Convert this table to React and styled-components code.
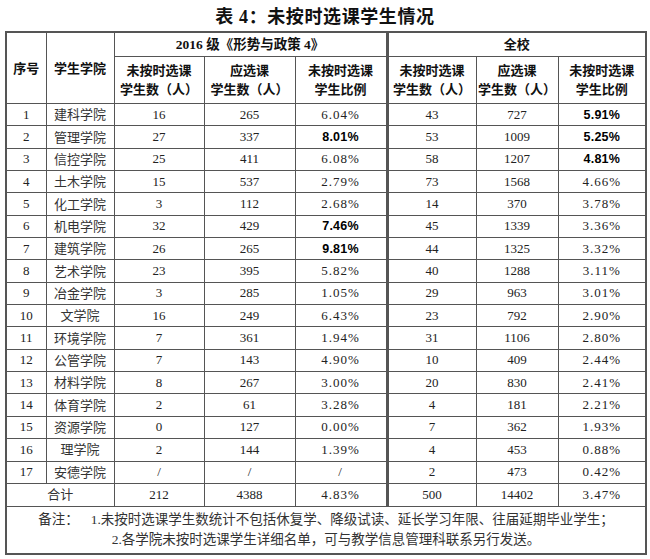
import React from "react";
import styled, { createGlobalStyle } from "styled-components";

const Global = createGlobalStyle`
  html, body { margin: 0; padding: 0; background: #fff; }
  body { width: 650px; height: 559px; overflow: hidden; }
`;

const Page = styled.div`
  width: 650px;
  padding: 0 0 0 5px;
  box-sizing: border-box;
`;

const Title = styled.h1`
  margin: 0;
  width: 640px;
  height: 31px;
  line-height: 35px;
  text-align: center;
  font-family: "Liberation Serif", "Noto Sans CJK SC", sans-serif;
  font-weight: 700;
  font-size: 18px;
  color: #111;
  letter-spacing: 0.6px;
`;

const Table = styled.table`
  width: 640px;
  table-layout: fixed;
  border-collapse: collapse;
  border: 2px solid #555;
`;

const Head = styled.th`
  border: 1px solid #555;
  ${(p) => p.$divider && "border-right: 3px solid #555;"}
  padding: 0;
  height: ${(p) => p.$h || 23}px;
  text-align: center;
  vertical-align: middle;
  font-family: "Liberation Serif", "Noto Sans CJK SC", sans-serif;
  font-weight: 700;
  font-size: ${(p) => p.$size || 13}px;
  line-height: 19px;
  color: #111;
`;

const Cell = styled.td`
  border: 1px solid #555;
  ${(p) => p.$divider && "border-right: 3px solid #555;"}
  padding: 0;
  height: ${(p) => p.$h || 21.35}px;
  text-align: center;
  vertical-align: middle;
  font-family: "Liberation Serif", "Noto Sans CJK SC", serif;
  font-size: 13px;
  line-height: 16px;
  color: #222;
`;

const Name = styled.span`
  font-family: "Noto Sans CJK SC", sans-serif;
  font-size: 13px;
  color: #333;
`;

const Pct = styled.span`
  font-family: ${(p) => (p.$bold ? '"Liberation Sans", sans-serif' : '"Liberation Serif", serif')};
  font-weight: ${(p) => (p.$bold ? 700 : 400)};
  font-size: ${(p) => (p.$bold ? "12.5px" : "13px")};
  letter-spacing: ${(p) => (p.$bold ? "0.2px" : "1px")};
  color: ${(p) => (p.$bold ? "#000" : "#222")};
`;

const NoteCell = styled.td`
  border: 1px solid #555;
  padding: 0;
  height: 46px;
  text-align: center;
  vertical-align: middle;
  font-family: "Liberation Serif", "Noto Sans CJK SC", serif;
  font-size: 13.5px;
  line-height: 20px;
  color: #333;
`;

const NoteLine = styled.div`
  white-space: nowrap;
`;

const Gap = styled.span`
  display: inline-block;
  width: 12px;
`;

const cols = [40, 68, 90, 91, 92, 89, 82, 88];

const rows = [
  [1, "建科学院", 16, 265, "6.04%", 43, 727, "5.91%", false, true],
  [2, "管理学院", 27, 337, "8.01%", 53, 1009, "5.25%", true, true],
  [3, "信控学院", 25, 411, "6.08%", 58, 1207, "4.81%", false, true],
  [4, "土木学院", 15, 537, "2.79%", 73, 1568, "4.66%"],
  [5, "化工学院", 3, 112, "2.68%", 14, 370, "3.78%"],
  [6, "机电学院", 32, 429, "7.46%", 45, 1339, "3.36%", true],
  [7, "建筑学院", 26, 265, "9.81%", 44, 1325, "3.32%", true],
  [8, "艺术学院", 23, 395, "5.82%", 40, 1288, "3.11%"],
  [9, "冶金学院", 3, 285, "1.05%", 29, 963, "3.01%"],
  [10, "文学院", 16, 249, "6.43%", 23, 792, "2.90%"],
  [11, "环境学院", 7, 361, "1.94%", 31, 1106, "2.80%"],
  [12, "公管学院", 7, 143, "4.90%", 10, 409, "2.44%"],
  [13, "材料学院", 8, 267, "3.00%", 20, 830, "2.41%"],
  [14, "体育学院", 2, 61, "3.28%", 4, 181, "2.21%"],
  [15, "资源学院", 0, 127, "0.00%", 7, 362, "1.93%"],
  [16, "理学院", 2, 144, "1.39%", 4, 453, "0.88%"],
  [17, "安德学院", "/", "/", "/", 2, 473, "0.42%"],
];

export default function App() {
  return (
    <Page>
      <Global />
      <Title>表 4：未按时选课学生情况</Title>
      <Table>
        <colgroup>
          {cols.map((w, i) => (
            <col key={i} style={{ width: w }} />
          ))}
        </colgroup>
        <thead>
          <tr>
            <Head rowSpan={2}>序号</Head>
            <Head rowSpan={2}>学生学院</Head>
            <Head colSpan={3} $divider $size={13.5}>
              2016 级《形势与政策 4》
            </Head>
            <Head colSpan={3}>全校</Head>
          </tr>
          <tr>
            <Head $h={46}>未按时选课<br />学生数（人）</Head>
            <Head $h={46}>应选课<br />学生数（人）</Head>
            <Head $h={46} $divider>未按时选课<br />学生比例</Head>
            <Head $h={46}>未按时选课<br />学生数（人）</Head>
            <Head $h={46}>应选课<br />学生数（人）</Head>
            <Head $h={46}>未按时选课<br />学生比例</Head>
          </tr>
        </thead>
        <tbody>
          {rows.map((r) => (
            <tr key={r[0]}>
              <Cell>{r[0]}</Cell>
              <Cell>
                <Name>{r[1]}</Name>
              </Cell>
              <Cell>{r[2]}</Cell>
              <Cell>{r[3]}</Cell>
              <Cell $divider>
                <Pct $bold={r[8]}>{r[4]}</Pct>
              </Cell>
              <Cell>{r[5]}</Cell>
              <Cell>{r[6]}</Cell>
              <Cell>
                <Pct $bold={r[9]}>{r[7]}</Pct>
              </Cell>
            </tr>
          ))}
          <tr>
            <Cell colSpan={2} $h={22}>
              <Name>合计</Name>
            </Cell>
            <Cell $h={22}>212</Cell>
            <Cell $h={22}>4388</Cell>
            <Cell $h={22} $divider>
              <Pct>4.83%</Pct>
            </Cell>
            <Cell $h={22}>500</Cell>
            <Cell $h={22}>14402</Cell>
            <Cell $h={22}>
              <Pct>3.47%</Pct>
            </Cell>
          </tr>
          <tr>
            <NoteCell colSpan={8}>
              <NoteLine>
                备注：<Gap />1.未按时选课学生数统计不包括休复学、降级试读、延长学习年限、往届延期毕业学生；
              </NoteLine>
              <NoteLine>2.各学院未按时选课学生详细名单，可与教学信息管理科联系另行发送。</NoteLine>
            </NoteCell>
          </tr>
        </tbody>
      </Table>
    </Page>
  );
}
